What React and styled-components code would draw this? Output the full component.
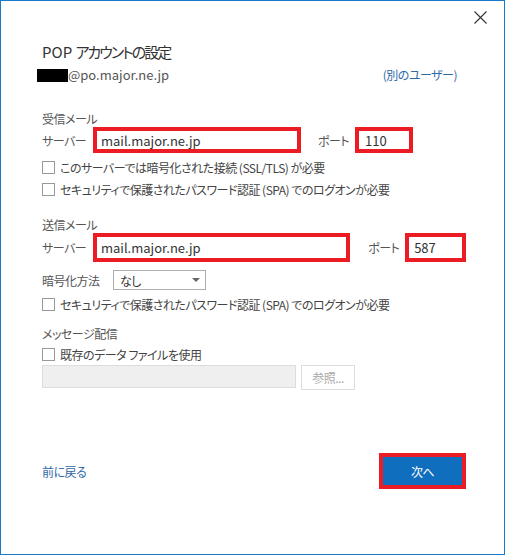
import styled, { createGlobalStyle } from 'styled-components';

const GlobalStyle = createGlobalStyle`
  html, body {
    margin: 0;
    padding: 0;
    background: #fff;
  }
  body {
    font-family: 'Noto Sans CJK JP', 'Noto Sans', sans-serif;
    font-feature-settings: 'palt';
    font-size: 12px;
    letter-spacing: -0.5px;
    color: #444;
  }
`;

const CloseIcon = () => (
  <svg width='13' height='13' viewBox='0 0 13 13'>
    <path d='M0.5 0.5 L12.5 12.5 M12.5 0.5 L0.5 12.5' stroke='#333' strokeWidth='1.1' fill='none' />
  </svg>
);

const Checkbox = ({ label, top }) => (
  <CheckRow top={top}>
    <Box />
    <span>{label}</span>
  </CheckRow>
);

const ServerRow = ({ height, serverWidth, portWidth, server, port, portGap, portPad }) => (
  <FieldRow height={height}>
    <RowLabel>サーバー</RowLabel>
    <MarkedInput width={serverWidth} pad={4}>{server}</MarkedInput>
    <PortLabel gap={portGap}>ポート</PortLabel>
    <MarkedInput width={portWidth} pad={portPad}>{port}</MarkedInput>
  </FieldRow>
);

export default function App() {
  return (
    <>
      <GlobalStyle />
      <Dialog>
        <TopBar>
          <CloseButton><CloseIcon /></CloseButton>
        </TopBar>
        <Title>POP <Kana>アカウントの設定</Kana></Title>
        <AccountRow>
          <Email>
            <Redacted />@po.major.ne.jp
          </Email>
          <Link>(別のユーザー)</Link>
        </AccountRow>

        <SectionLabel top={27}>受信メール</SectionLabel>
        <ServerRow height={26} serverWidth={208} portWidth={58} portGap={17} portPad={6} server='mail.major.ne.jp' port='110' />
        <Checkbox top={3} label='このサーバーでは暗号化された接続 (SSL/TLS) が必要' />
        <Checkbox top={0} label='セキュリティで保護されたパスワード認証 (SPA) でのログオンが必要' />

        <SectionLabel top={17}>送信メール</SectionLabel>
        <ServerRow height={29} serverWidth={258} portWidth={61} portGap={18} portPad={5} server='mail.major.ne.jp' port='587' />
        <SelectRow>
          <RowLabel wide>暗号化方法</RowLabel>
          <Select>
            <span>なし</span>
            <Arrow />
          </Select>
        </SelectRow>
        <Checkbox top={3} label='セキュリティで保護されたパスワード認証 (SPA) でのログオンが必要' />

        <SectionLabel top={11}>メッセージ配信</SectionLabel>
        <Checkbox top={1} label='既存のデータ ファイルを使用' />
        <FileRow>
          <FileInput />
          <BrowseButton>参照...</BrowseButton>
        </FileRow>

        <Footer>
          <Link>前に戻る</Link>
          <NextButton>次へ</NextButton>
        </Footer>
      </Dialog>
    </>
  );
}

const Dialog = styled.div`
  width: 505px;
  height: 555px;
  box-sizing: border-box;
  border: 1px solid #1979ca;
  padding: 0 38px 0 41px;
  display: flex;
  flex-direction: column;
`;

const TopBar = styled.div`
  height: 33px;
  flex-shrink: 0;
  display: flex;
  justify-content: flex-end;
  margin-right: -21px;
`;

const CloseButton = styled.div`
  width: 13px;
  height: 13px;
  margin-top: 9px;
`;

const Title = styled.div`
  margin-top: 8px;
  height: 20px;
  font-size: 15px;
  line-height: 20px;
  letter-spacing: 0;
  color: #333;
`;

const Kana = styled.span`
  letter-spacing: -2px;
`;

const AccountRow = styled.div`
  margin-top: 4px;
  margin-left: -5px;
  margin-right: 9px;
  height: 18px;
  display: flex;
  justify-content: space-between;
  align-items: center;
  line-height: 18px;
  color: #555;
`;

const Email = styled.span`
  font-size: 13px;
  letter-spacing: 0;
`;

const Redacted = styled.span`
  display: inline-block;
  width: 31px;
  height: 13px;
  background: #000;
  vertical-align: -2px;
`;

const Link = styled.span`
  color: #2d6aa8;
  font-size: 12px;
`;

const SectionLabel = styled.div`
  margin-top: ${p => p.top}px;
  height: 16px;
  line-height: 16px;
  color: #555;
`;

const FieldRow = styled.div`
  height: ${p => p.height}px;
  flex-shrink: 0;
  display: flex;
  align-items: center;
`;

const RowLabel = styled.span`
  width: ${p => (p.wide ? 71 : 51)}px;
  flex-shrink: 0;
  color: #555;
`;

const PortLabel = styled.span`
  margin-left: ${p => p.gap}px;
  width: 37px;
  color: #555;
`;

const MarkedInput = styled.div`
  width: ${p => p.width}px;
  height: 100%;
  box-sizing: border-box;
  border: 4px solid #ec1c24;
  padding: 0 ${p => p.pad}px;
  display: flex;
  align-items: center;
  font-size: 13px;
  letter-spacing: 0;
  color: #333;
  background: #fff;
`;

const CheckRow = styled.div`
  margin-top: ${p => p.top}px;
  height: 22px;
  flex-shrink: 0;
  display: flex;
  align-items: center;
  gap: 5px;
  color: #444;
`;

const Box = styled.span`
  width: 13px;
  height: 13px;
  box-sizing: border-box;
  border: 1px solid #999;
  background: #fff;
  flex-shrink: 0;
`;

const SelectRow = styled.div`
  margin-top: 8px;
  height: 20px;
  flex-shrink: 0;
  display: flex;
  align-items: center;
`;

const Select = styled.div`
  width: 93px;
  height: 20px;
  box-sizing: border-box;
  border: 1px solid #adadad;
  padding: 0 6px;
  display: flex;
  align-items: center;
  justify-content: space-between;
  color: #333;
`;

const Arrow = styled.span`
  width: 0;
  height: 0;
  border-left: 4px solid transparent;
  border-right: 4px solid transparent;
  border-top: 4px solid #666;
  margin-right: -1px;
`;

const FileRow = styled.div`
  display: flex;
  gap: 5px;
  flex-shrink: 0;
`;

const FileInput = styled.div`
  width: 254px;
  height: 23px;
  box-sizing: border-box;
  border: 1px solid #ddd;
  background: #efefef;
`;

const BrowseButton = styled.div`
  width: 54px;
  height: 25px;
  box-sizing: border-box;
  border: 1px solid #ddd;
  background: #fff;
  color: #aaa;
  display: flex;
  align-items: center;
  justify-content: center;
`;

const Footer = styled.div`
  margin-top: 63px;
  height: 36px;
  display: flex;
  justify-content: space-between;
  align-items: center;
`;

const NextButton = styled.div`
  width: 87px;
  height: 36px;
  box-sizing: border-box;
  border: 4px solid #ec1c24;
  background: #106ebe;
  color: #fff;
  display: flex;
  align-items: center;
  justify-content: center;
`;
